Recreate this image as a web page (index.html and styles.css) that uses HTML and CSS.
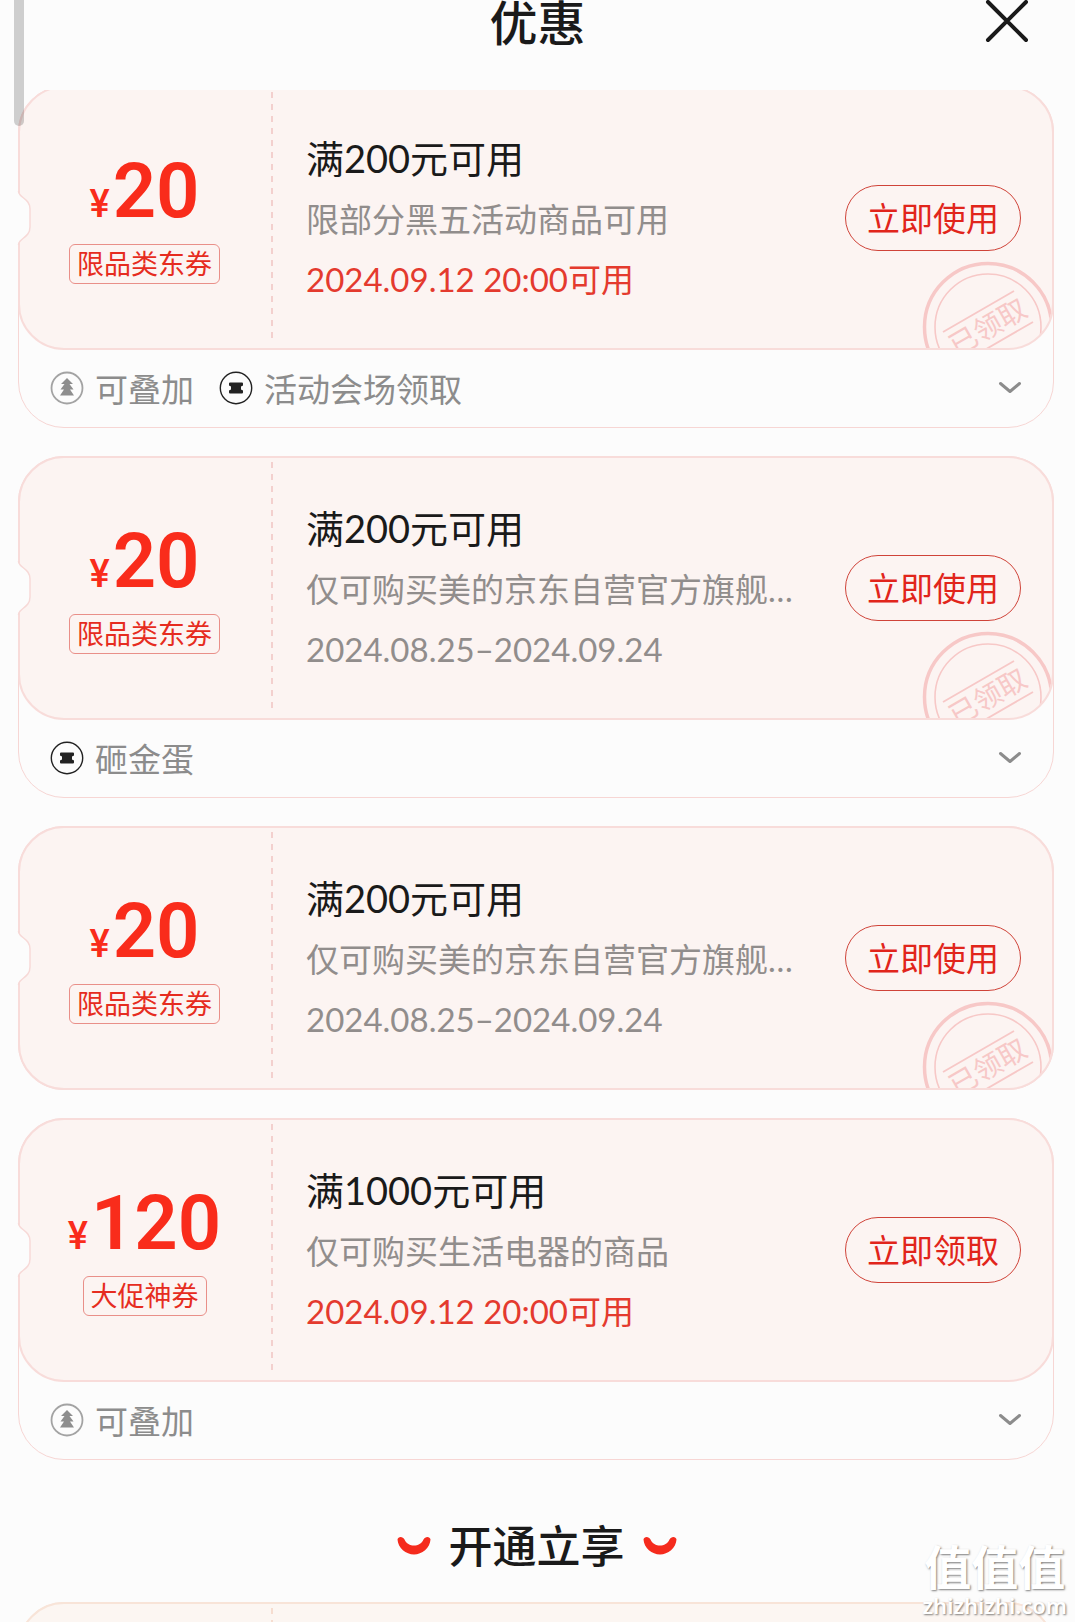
FILE: index.html
```html
<!DOCTYPE html>
<html lang="zh-CN">
<head>
    <meta charset="UTF-8">
    <meta name="viewport" content="width=device-width, initial-scale=1.0">
    <title>优惠</title>
    <link rel="stylesheet" href="styles.css">
</head>
<body>
    <!-- shared icons -->
    <svg class="sprite" aria-hidden="true">
        <symbol id="icon-stack" viewBox="0 0 34 34">
            <circle cx="17" cy="17" r="15.5" fill="none" stroke="#a3a3a3" stroke-width="1.8"/>
            <path d="M17 7l6 6h-3.500l4 5.500h-3.500l4 6h-14l4-6h-3.500l4-5.500H11z" fill="#8e8e8e"/>
        </symbol>
        <symbol id="icon-ticket" viewBox="0 0 34 34">
            <circle cx="17" cy="17" r="15.700" fill="none" stroke="#222" stroke-width="1.400"/>
            <path d="M11 11.500h12a1 1 0 0 1 1 1v2l-2 1v3l2 1v2a1 1 0 0 1-1 1H11a1 1 0 0 1-1-1v-2l2-1v-3l-2-1v-2a1 1 0 0 1 1-1z" fill="#222"/>
        </symbol>
        <symbol id="icon-chevron" viewBox="0 0 24 16">
            <path d="M2.500 3.500l9.500 8 9.500-8" fill="none" stroke="#8c8c8c" stroke-width="3" stroke-linecap="round" stroke-linejoin="round"/>
        </symbol>
        <symbol id="icon-smile" viewBox="0 0 34 20">
            <path d="M.5 3.500C1 0 6 0 7.500 3.500C11 11.500 23 11.500 26.500 3.500C28 0 33 0 33.500 3.500C33 12 25 18.500 17 18.500S1 12 .5 3.500z" fill="#f52b1d"/>
        </symbol>
        <symbol id="notch" viewBox="0 0 14 54">
            <path d="M0 1.500h1.500C2 7 13 8 13 18v18C13 46 2 47 1.500 52.500H0z" fill="#fcfcfc"/>
            <path d="M1.500 0C1.500 7 13 7 13 18v18C13 47 1.500 47 1.500 54" fill="none" stroke="#f7d9d7" stroke-width="1.500"/>
        </symbol>
        <symbol id="stamp" viewBox="0 0 132 132">
            <g fill="none" stroke="#f7c8c7">
                <circle cx="66" cy="66" r="63.500" stroke-width="3.500"/>
                <circle cx="66" cy="66" r="53" stroke-width="1.600"/>
                <path d="M21 71l71-41M40 102l71-41" stroke-width="1.800"/>
            </g>
            <text x="66" y="76" transform="rotate(-30 66 66)" text-anchor="middle" font-size="28" fill="#f7c8c7">已领取</text>
        </symbol>
    </svg>

    <div class="app">
        <div class="scrollbar"></div>
        <header class="header">
            <h1>优惠</h1>
            <button class="close" type="button" aria-label="关闭">
                <svg viewBox="0 0 44 44"><path d="M3 2l38 38M41 2L3 40" stroke="#1a1a1a" stroke-width="4" stroke-linecap="round"/></svg>
            </button>
        </header>

        <main class="list">
            <div class="coupons">
                <article class="coupon">
                    <div class="panel">
                        <div class="value">
                            <p class="amount"><small>¥</small>20</p>
                            <span class="tag">限品类东券</span>
                        </div>
                        <div class="info">
                            <h3>满200元可用</h3>
                            <p class="desc">限部分黑五活动商品可用</p>
                            <p class="date soon">2024.09.12 20:00可用</p>
                        </div>
                        <button class="action" type="button">立即使用</button>
                        <svg class="stamp"><use href="#stamp"/></svg>
                    </div>
                    <svg class="notch"><use href="#notch"/></svg>
                    <div class="extra">
                        <span class="label"><svg><use href="#icon-stack"/></svg>可叠加</span>
                        <span class="label"><svg><use href="#icon-ticket"/></svg>活动会场领取</span>
                        <button class="toggle" type="button" aria-label="展开"><svg><use href="#icon-chevron"/></svg></button>
                    </div>
                </article>

                <article class="coupon">
                    <div class="panel">
                        <div class="value">
                            <p class="amount"><small>¥</small>20</p>
                            <span class="tag">限品类东券</span>
                        </div>
                        <div class="info">
                            <h3>满200元可用</h3>
                            <p class="desc">仅可购买美的京东自营官方旗舰…</p>
                            <p class="date">2024.08.25–2024.09.24</p>
                        </div>
                        <button class="action" type="button">立即使用</button>
                        <svg class="stamp"><use href="#stamp"/></svg>
                    </div>
                    <svg class="notch"><use href="#notch"/></svg>
                    <div class="extra">
                        <span class="label"><svg><use href="#icon-ticket"/></svg>砸金蛋</span>
                        <button class="toggle" type="button" aria-label="展开"><svg><use href="#icon-chevron"/></svg></button>
                    </div>
                </article>

                <article class="coupon">
                    <div class="panel">
                        <div class="value">
                            <p class="amount"><small>¥</small>20</p>
                            <span class="tag">限品类东券</span>
                        </div>
                        <div class="info">
                            <h3>满200元可用</h3>
                            <p class="desc">仅可购买美的京东自营官方旗舰…</p>
                            <p class="date">2024.08.25–2024.09.24</p>
                        </div>
                        <button class="action" type="button">立即使用</button>
                        <svg class="stamp"><use href="#stamp"/></svg>
                    </div>
                    <svg class="notch"><use href="#notch"/></svg>
                </article>

                <article class="coupon">
                    <div class="panel">
                        <div class="value">
                            <p class="amount"><small>¥</small>120</p>
                            <span class="tag">大促神券</span>
                        </div>
                        <div class="info">
                            <h3>满1000元可用</h3>
                            <p class="desc">仅可购买生活电器的商品</p>
                            <p class="date soon">2024.09.12 20:00可用</p>
                        </div>
                        <button class="action" type="button">立即领取</button>
                    </div>
                    <svg class="notch"><use href="#notch"/></svg>
                    <div class="extra">
                        <span class="label"><svg><use href="#icon-stack"/></svg>可叠加</span>
                        <button class="toggle" type="button" aria-label="展开"><svg><use href="#icon-chevron"/></svg></button>
                    </div>
                </article>
            </div>

            <h2 class="section-title">
                <svg><use href="#icon-smile"/></svg>
                开通立享
                <svg><use href="#icon-smile"/></svg>
            </h2>

            <div class="coupons">
                <article class="coupon member">
                    <div class="panel">
                        <div class="value"></div>
                    </div>
                </article>
            </div>
        </main>

        <div class="watermark">
            <strong>值值值</strong>
            <span>zhizhizhi.com</span>
        </div>
    </div>
</body>
</html>
```
FILE: styles.css
```css
* {
    box-sizing: border-box;
}

body {
    margin: 0;
    font-family: Lato, "Noto Sans CJK SC", sans-serif;
    font-size: 33px;
    color: #1a1a1a;
    background-color: #fcfcfc;
}

h1, h2, h3, p {
    margin: 0;
    font-weight: 400;
}

button {
    font: inherit;
    background: none;
    border: none;
    padding: 0;
    cursor: pointer;
}

svg {
    display: block;
    flex: none;
}

.sprite {
    position: absolute;
    width: 0;
    height: 0;
}

.app {
    position: relative;
    display: flex;
    flex-direction: column;
    height: 100vh;
    overflow: hidden;
}

.scrollbar {
    position: absolute;
    z-index: 2;
    top: 0;
    left: 14px;
    width: 10px;
    height: 126px;
    border-radius: 0 0 5px 5px;
    background-color: rgba(0, 0, 0, 0.18);
}

/* header */
.header {
    flex: none;
    display: grid;
    grid-template-columns: 1fr auto 1fr;
    align-items: start;
    height: 90px;
    padding: 0 46px;
}

.header h1 {
    grid-column: 2;
    font-size: 48px;
    font-weight: 500;
    line-height: 46px;
}

.close {
    justify-self: end;
}

.close svg {
    width: 44px;
    height: 44px;
}

/* coupon list */
.list {
    flex: 1;
    min-height: 0;
    overflow: hidden;
}

.coupons {
    display: flex;
    flex-direction: column;
    gap: 28px;
    padding: 0 21px 0 18px;
}

.coupons:first-child {
    margin-top: -4px;
}

.coupon {
    position: relative;
    border: 1px solid #f7d6d4;
    border-radius: 46px;
}

.panel {
    position: relative;
    display: flex;
    align-items: center;
    margin: -1px;
    padding-right: 31px;
    overflow: hidden;
    border: 2px solid #f8dcda;
    border-radius: 46px;
    background-color: #fcf4f2;
}

.value {
    align-self: stretch;
    display: flex;
    flex-direction: column;
    align-items: center;
    justify-content: center;
    gap: 2px;
    width: 253px;
    margin: 4px 0;
    padding-right: 4px;
    color: #f92c1b;
    background: repeating-linear-gradient(#f3d0ce 0 6px, transparent 6px 12px) right / 2px 100% no-repeat;
}

.amount {
    font-family: Roboto, sans-serif;
    font-size: 76px;
    font-weight: 600;
    line-height: 76px;
}

.amount small {
    margin-right: 3px;
    font-size: 38px;
    font-weight: 500;
}

.tag {
    padding: 0 7px;
    border: 1px solid #e98f89;
    border-radius: 6px;
    font-size: 27px;
    line-height: 38px;
    color: #e62c20;
}

.info {
    flex: 1;
    min-width: 0;
    padding: 39px 36px 39px 33px;
    line-height: 60px;
}

.info h3 {
    font-size: 38px;
    line-height: 62px;
}

.desc,
.date {
    color: #918d8c;
}

.desc {
    overflow: hidden;
    white-space: nowrap;
    text-overflow: ellipsis;
}

.date.soon {
    color: #e43a2e;
}

.action {
    width: 176px;
    height: 66px;
    padding-bottom: 2px;
    border: 1px solid #cf4339;
    border-radius: 33px;
    color: #e1251b;
}

.stamp {
    position: absolute;
    right: -2px;
    bottom: -45px;
    width: 132px;
    height: 132px;
}

.notch {
    position: absolute;
    top: 104px;
    left: -2px;
    width: 14px;
    height: 54px;
}

.extra {
    display: flex;
    align-items: center;
    gap: 25px;
    height: 78px;
    padding: 0 31px;
    color: #8c8c8c;
}

.label {
    display: flex;
    align-items: center;
    gap: 11px;
}

.label svg {
    width: 34px;
    height: 34px;
}

.toggle {
    margin-left: auto;
}

.toggle svg {
    width: 24px;
    height: 16px;
}

/* member section */
.section-title {
    display: flex;
    align-items: center;
    justify-content: center;
    gap: 18px;
    padding: 56px 2px 26px 0;
    font-size: 44px;
    font-weight: 500;
    line-height: 60px;
}

.section-title svg {
    width: 34px;
    height: 20px;
}

.member,
.member .panel {
    border-color: #f8e4d8;
}

.member .panel {
    min-height: 264px;
    background-color: #fcf6f2;
}

.member .value {
    background-image: repeating-linear-gradient(#f6ddd0 0 6px, transparent 6px 12px);
}

.watermark {
    position: absolute;
    right: 8px;
    bottom: 5px;
    text-align: center;
    color: #fff;
    text-shadow: 1px 1px 2px rgba(0, 0, 0, 0.5);
}

.watermark strong,
.watermark span {
    display: block;
}

.watermark strong {
    font-size: 47px;
    line-height: 52px;
}

.watermark span {
    font-family: "Noto Sans", sans-serif;
    font-size: 22px;
    font-weight: 600;
    line-height: 24px;
}
```
